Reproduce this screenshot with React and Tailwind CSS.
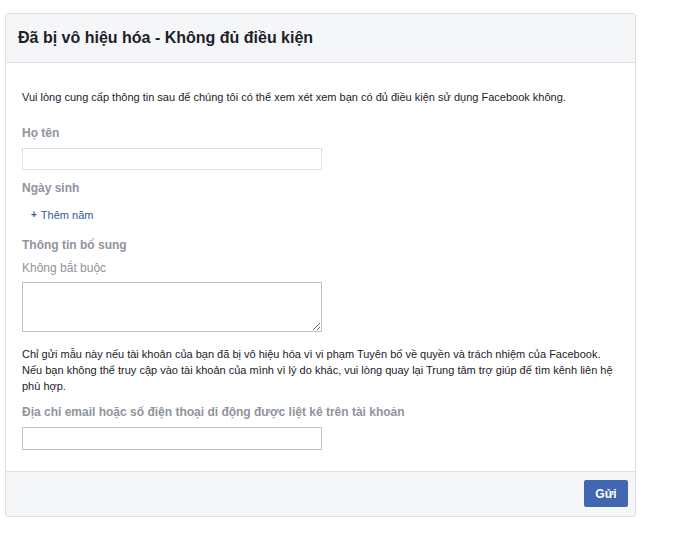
const labelCls = "text-xs font-bold leading-4 text-[#90949c]";

const App = () => {
  return (
    <div className="min-h-[541px] bg-white pt-[13px] pl-[5px] font-['Liberation_Sans',Arial,sans-serif]">
      <div className="w-[631px] rounded-[3px] border border-[#dddfe2] bg-white">
        <div className="flex h-[49px] items-center border-b border-[#dddfe2] bg-[#f5f6f7] px-3">
          <h2 className="text-base font-bold text-[#1d2129]">Đã bị vô hiệu hóa - Không đủ điều kiện</h2>
        </div>
        <div className="px-4 pt-[26px] pb-[21px] text-[11px] leading-4 text-[#1d2129]">
          <p>Vui lòng cung cấp thông tin sau để chúng tôi có thể xem xét xem bạn có đủ điều kiện sử dụng Facebook không.</p>
          <div className={`${labelCls} mt-5`}>Họ tên</div>
          <input type="text" className="mt-[7px] block h-[22px] w-[300px] border border-[#dddfe2] px-1 text-xs outline-none" />
          <div className={`${labelCls} mt-[10px]`}>Ngày sinh</div>
          <div className="mt-[11px] flex items-center gap-1 pl-[9px] text-[#365899]">
            <span className="text-[10px] font-bold leading-4">+</span>
            <span>Thêm năm</span>
          </div>
          <div className={`${labelCls} mt-[14px]`}>Thông tin bổ sung</div>
          <div className="mt-[7px] text-xs leading-4 text-[#90949c]">Không bắt buộc</div>
          <textarea className="mt-[6px] block h-[50px] w-[300px] border border-[#bec3c9] px-1 text-xs outline-none" />
          <p className="mt-[14px]">
            Chỉ gửi mẫu này nếu tài khoản của bạn đã bị vô hiệu hóa vì vi phạm Tuyên bố về quyền và trách nhiệm của Facebook. Nếu bạn không thể truy cập vào tài khoản của mình vì lý do khác, vui lòng quay lại Trung tâm trợ giúp để tìm kênh liên hệ phù hợp.
          </p>
          <div className={`${labelCls} mt-[10px]`}>Địa chỉ email hoặc số điện thoại di động được liệt kê trên tài khoản</div>
          <input type="text" className="mt-[7px] block h-[23px] w-[300px] border border-[#bec3c9] px-1 text-xs outline-none" />
        </div>
        <div className="flex justify-end border-t border-[#dddfe2] bg-[#f5f6f7] px-[7px] pt-2 pb-[9px]">
          <button className="h-[27px] w-11 rounded-[2px] bg-[#4267b2] text-xs font-bold text-white">Gửi</button>
        </div>
      </div>
    </div>
  );
};

export default App;
